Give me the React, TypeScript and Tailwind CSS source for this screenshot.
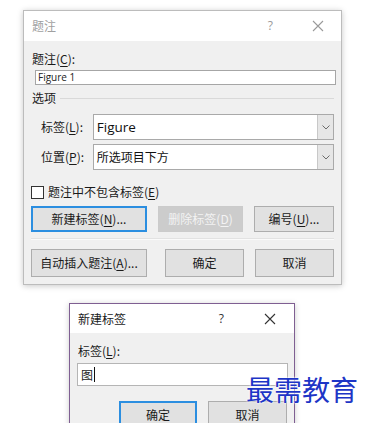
import React from 'react';

const ui = { fontFamily: '"Noto Sans CJK SC", "Liberation Sans", sans-serif' };
const latin = { fontFamily: '"Open Sans", "Noto Sans CJK SC", sans-serif' };

const Key: React.FC<{ k: string }> = ({ k }) => (
  <>
    (<u className="underline-offset-2">{k}</u>)
  </>
);

const CloseIcon: React.FC<{ color: string }> = ({ color }) => (
  <svg width="12" height="12" viewBox="0 0 12 12">
    <path d="M1 1 L11 11 M11 1 L1 11" stroke={color} strokeWidth="1.1" fill="none" />
  </svg>
);

const Chevron = () => (
  <svg width="8" height="5" viewBox="0 0 8 5">
    <path d="M0.5 0.5 L4 4 L7.5 0.5" stroke="#6b6b6b" strokeWidth="1" fill="none" />
  </svg>
);

const Combo: React.FC<{ children: React.ReactNode; className?: string }> = ({ children, className }) => (
  <div className={`flex h-[26px] w-[242px] items-stretch border border-[#a9a9a9] bg-white ${className ?? ''}`}>
    <div className="flex flex-1 items-center pl-[3px] text-[#111]">{children}</div>
    <div className="flex w-[16px] items-center justify-center border-l border-[#c8c8c8] bg-[#e6e6e6]">
      <Chevron />
    </div>
  </div>
);

const Btn: React.FC<{ children: React.ReactNode; w: string; h?: string; primary?: boolean; disabled?: boolean }> = ({
  children,
  w,
  h = 'h-[26px]',
  primary,
  disabled,
}) => (
  <div
    className={`flex ${w} ${h} items-center justify-center text-[12px] ${
      primary
        ? 'border-2 border-[#2b8ee0] bg-[#e1e1e1] text-[#1a1a1a]'
        : disabled
        ? 'border border-[#cbcbcb] bg-[#cccccc] text-[#f3f3f3]'
        : 'border border-[#adadad] bg-[#e1e1e1] text-[#1a1a1a]'
    }`}
  >
    {children}
  </div>
);

const App: React.FC = () => {
  return (
    <div className="relative h-[423px] w-[369px] overflow-hidden bg-white" style={ui}>
      <div className="flex flex-col">
        {/* Caption dialog */}
        <div className="ml-[23px] mt-[10px] flex h-[275px] w-[319px] flex-col border border-[#bcbcbc] bg-[#f0f0f0] shadow-[0_1px_6px_rgba(0,0,0,0.22)]">
          <div className="flex h-[30px] items-center bg-white pl-[8px] text-[12px] text-[#a0a0a0]">
            <span className="flex-1">题注</span>
            <span className="mr-[39px] text-[12px] text-[#9a9a9a]" style={latin}>?</span>
            <span className="mr-[17px] flex"><CloseIcon color="#9a9a9a" /></span>
          </div>

          <div className="flex flex-col px-[7px] text-[12px] text-[#1a1a1a]">
            <div className="ml-[1px] mt-[10px] h-[16px] leading-[16px]">
              题注<Key k="C" />:
            </div>
            <div
              className="ml-[4px] mt-[3px] flex h-[15px] w-[301px] items-center border border-[#a6a6a6] bg-white pl-[2px] text-[10px] text-[#222]"
              style={latin}
            >
              Figure 1
            </div>
            <div className="ml-[1px] mt-[5px] flex h-[16px] items-center">
              <span className="leading-[16px]">选项</span>
              <div className="ml-[4px] h-px flex-1 bg-[#d9d9d9]" />
            </div>

            <div className="mt-[8px] flex items-center">
              <span className="ml-[10px] w-[52px]">标签<Key k="L" />:</span>
              <Combo>
                <span className="text-[13.5px]" style={latin}>Figure</span>
              </Combo>
            </div>
            <div className="mt-[4px] flex items-center">
              <span className="ml-[10px] w-[52px]">位置<Key k="P" />:</span>
              <Combo>所选项目下方</Combo>
            </div>

            <div className="mt-[14px] flex h-[16px] items-center">
              <div className="h-[13px] w-[13px] border border-[#333] bg-white" />
              <span className="ml-[4px]">题注中不包含标签<Key k="E" /></span>
            </div>

            <div className="mt-[6px] flex">
              <Btn w="w-[117px]" primary>
                新建标签<Key k="N" />...
              </Btn>
              <div className="ml-[11px]">
                <Btn w="w-[85px]" disabled>
                  删除标签<Key k="D" />
                </Btn>
              </div>
              <div className="ml-[11px]">
                <Btn w="w-[80px]">
                  编号<Key k="U" />...
                </Btn>
              </div>
            </div>

            <div className="mt-[6px] h-[2px] border-t border-b border-t-[#e2e2e2] border-b-[#fafafa]" />

            <div className="mt-[9px] flex">
              <Btn w="w-[117px]" h="h-[28px]">
                自动插入题注<Key k="A" />...
              </Btn>
              <div className="ml-[18px]">
                <Btn w="w-[79px]" h="h-[28px]">确定</Btn>
              </div>
              <div className="ml-[11px]">
                <Btn w="w-[79px]" h="h-[28px]">取消</Btn>
              </div>
            </div>
          </div>
        </div>

        {/* New label dialog */}
        <div className="ml-[69px] mt-[18px] flex h-[140px] w-[226px] flex-col border border-[#7f5f92] bg-[#f0f0f0] shadow-[0_1px_6px_rgba(0,0,0,0.2)]">
          <div className="flex h-[29px] items-center bg-white pl-[8px] text-[12px] text-[#1a1a1a]">
            <span className="flex-1">新建标签</span>
            <span className="mr-[40px] text-[12px] text-[#333]" style={latin}>?</span>
            <span className="mr-[18px] flex"><CloseIcon color="#333" /></span>
          </div>
          <div className="flex flex-col px-[7px] text-[12px] text-[#1a1a1a]">
            <div className="ml-[1px] mt-[10px] h-[16px] leading-[16px]">
              标签<Key k="L" />:
            </div>
            <div className="mt-[4px] flex h-[23px] w-[211px] items-center border border-[#b5b5b5] bg-white pl-[3px] text-[12px]">
              图<span className="ml-[1px] h-[15px] w-px bg-[#111]" />
            </div>
            <div className="ml-[42px] mt-[15px] flex">
              <Btn w="w-[78px]" h="h-[28px]" primary>确定</Btn>
              <div className="ml-[11px]">
                <Btn w="w-[79px]" h="h-[28px]">取消</Btn>
              </div>
            </div>
          </div>
        </div>
      </div>

      {/* watermark */}
      <div
        className="absolute left-[246px] top-[373px] text-[28px] leading-[32px] tracking-[0px] text-[#1d35c6]"
        style={{ textShadow: '0 0 2px #fff, 0 0 2px #fff' }}
      >
        最需教育
      </div>
    </div>
  );
};

export default App;
